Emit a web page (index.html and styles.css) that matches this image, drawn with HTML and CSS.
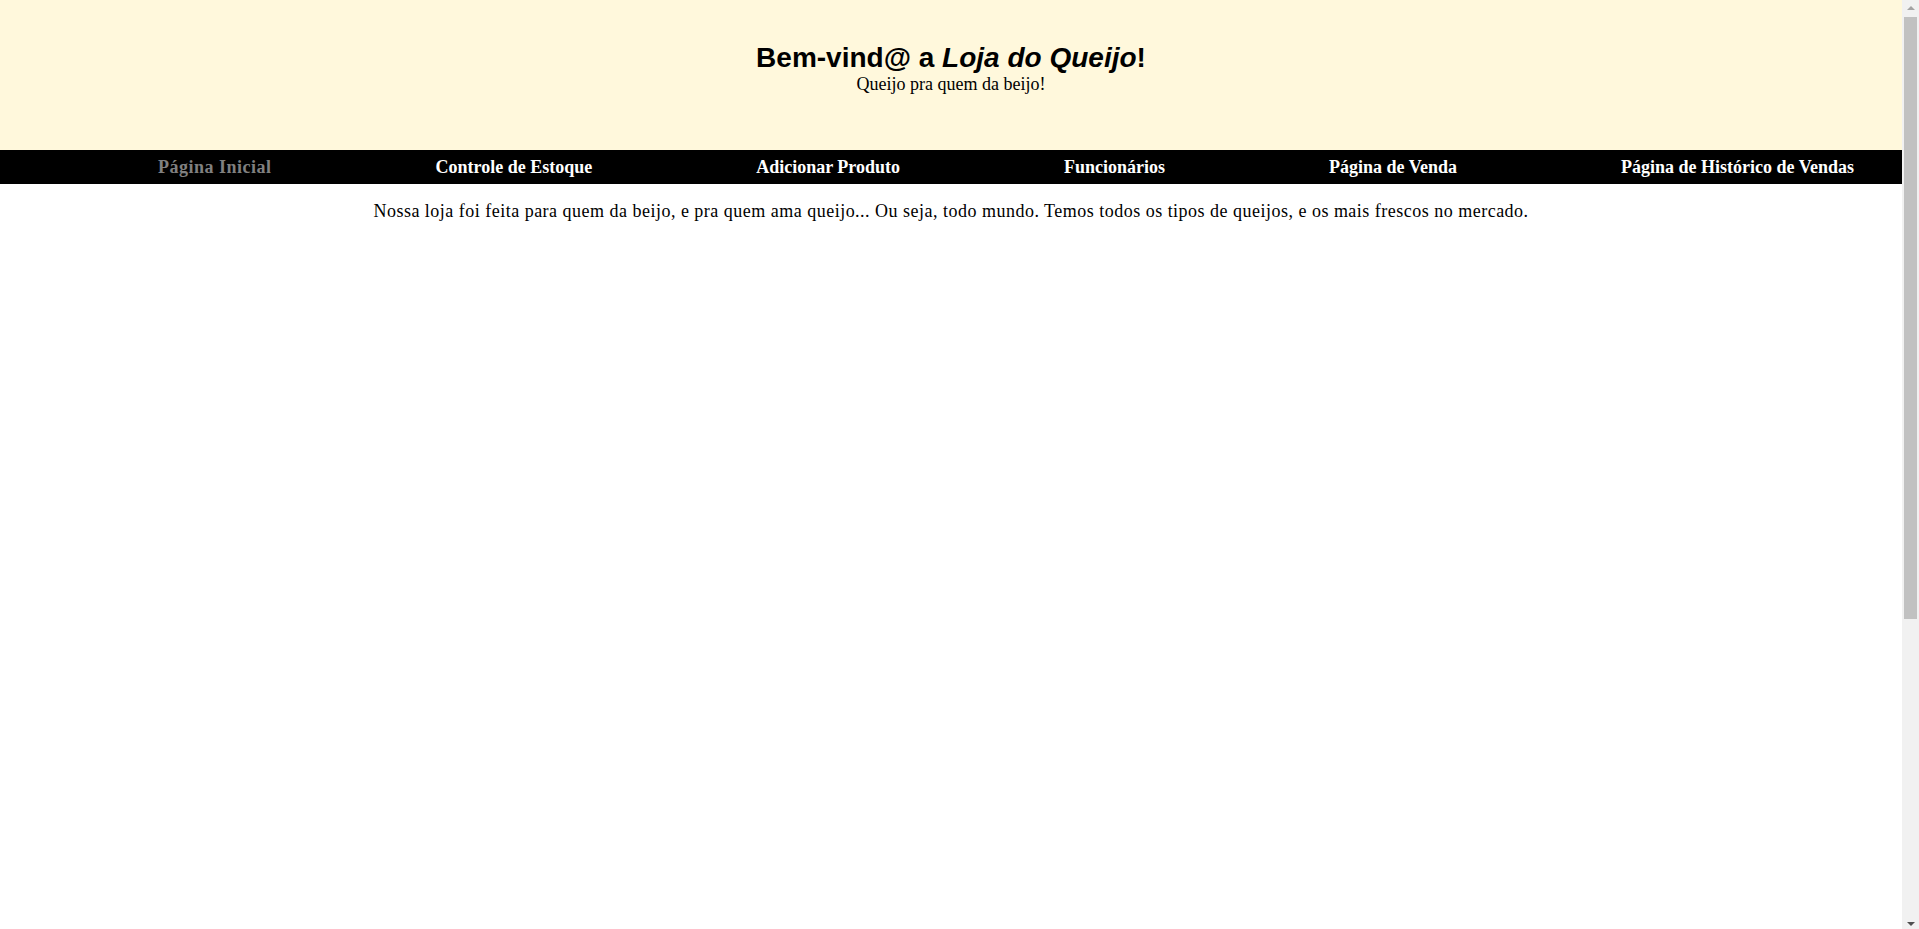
FILE: index.html
```html
<!DOCTYPE html>
<html lang="pt-BR">
<head>
<meta charset="utf-8">
<title>Loja do Queijo</title>
<link rel="stylesheet" href="styles.css">
</head>
<body>
<header class="site-header">
  <h1 class="title">Bem-vind@ a <em>Loja do Queijo</em>!</h1>
  <p class="tagline">Queijo pra quem da beijo!</p>
</header>
<nav class="main-nav">
  <a class="nav-link active" href="#">Página Inicial</a>
  <a class="nav-link" href="#">Controle de Estoque</a>
  <a class="nav-link" href="#">Adicionar Produto</a>
  <a class="nav-link" href="#">Funcionários</a>
  <a class="nav-link" href="#">Página de Venda</a>
  <a class="nav-link" href="#">Página de Histórico de Vendas</a>
</nav>
<main class="content">
  <p class="intro">Nossa loja foi feita para quem da beijo, e pra quem ama queijo... Ou seja, todo mundo. Temos todos os tipos de queijos, e os mais frescos no mercado.</p>
</main>
<div class="scrollbar" aria-hidden="true">
  <div class="sb-button sb-up"><span class="arrow-up"></span></div>
  <div class="sb-track"><div class="sb-thumb"></div></div>
  <div class="sb-button sb-down"><span class="arrow-down"></span></div>
</div>
</body>
</html>
```

FILE: styles.css
```css
html, body {
  margin: 0;
  padding: 0;
}

body {
  font-family: "Liberation Serif", "Times New Roman", serif;
  font-size: 18px;
  color: #000;
  background: #fff;
  margin-right: 17px;
  min-height: 1381px;
}

.site-header {
  background: #fff8dc;
  height: 150px;
  box-sizing: border-box;
  padding-top: 42px;
  text-align: center;
}

.title {
  margin: 0;
  font-family: "Liberation Sans", Arial, sans-serif;
  font-size: 28px;
  font-weight: bold;
  line-height: 31px;
}

.title em {
  font-style: italic;
}

.tagline {
  margin: 0;
  font-size: 18px;
  line-height: 22px;
}

.main-nav {
  background: #000;
  display: flex;
  justify-content: space-between;
  padding: 7px 48px 6px 158px;
  height: 34px;
  box-sizing: border-box;
}

.nav-link {
  color: #fff;
  font-weight: bold;
  font-size: 18px;
  line-height: 21px;
  text-decoration: none;
}

.nav-link.active {
  color: #808080;
  letter-spacing: 0.5px;
}

.content {
  padding-top: 17px;
  text-align: center;
}

.intro {
  margin: 0;
  line-height: 21px;
  letter-spacing: 0.49px;
}

/* classic scrollbar look */
.scrollbar {
  position: fixed;
  top: 0;
  right: 0;
  width: 17px;
  height: 100vh;
  background: #f1f1f1;
  display: flex;
  flex-direction: column;
}

.sb-button {
  height: 17px;
  flex: none;
  display: flex;
  align-items: center;
  justify-content: center;
}

.sb-track {
  flex: 1;
  padding: 0 2px;
}

.sb-thumb {
  height: 602px;
  background: #c1c1c1;
}

.arrow-up {
  width: 0;
  height: 0;
  border-left: 4px solid transparent;
  border-right: 4px solid transparent;
  border-bottom: 4px solid #a3a3a3;
  margin-top: -2px;
}

.arrow-down {
  width: 0;
  height: 0;
  border-left: 4px solid transparent;
  border-right: 4px solid transparent;
  border-top: 4px solid #505050;
  margin-top: 6px;
}
```
